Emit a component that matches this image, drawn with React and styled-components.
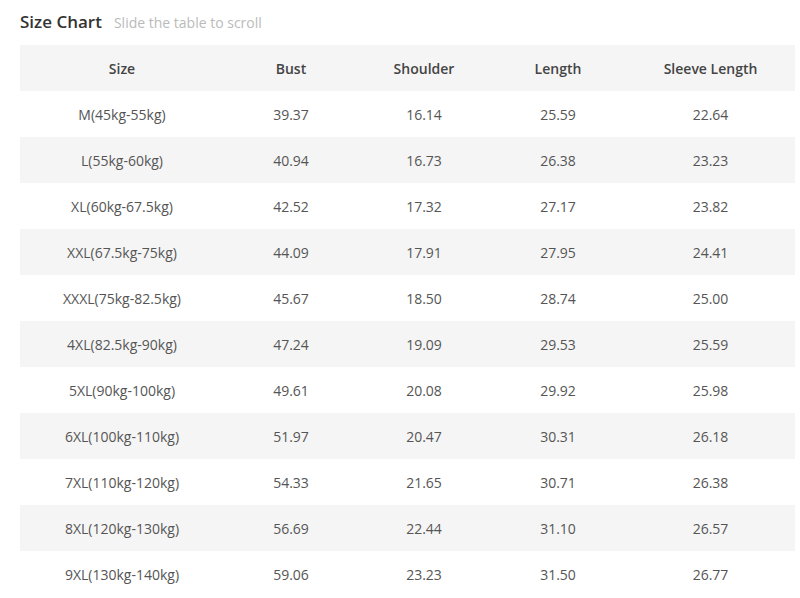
import React from 'react';
import styled, { createGlobalStyle } from 'styled-components';

const GlobalStyle = createGlobalStyle`
  body {
    margin: 0;
    background: #fff;
    font-family: "Open Sans", "Liberation Sans", sans-serif;
  }
`;

const Wrapper = styled.div`
  padding: 10px 5px 0 20px;
`;

const TitleBar = styled.div`
  display: flex;
  align-items: baseline;
  gap: 12px;
  height: 35px;
`;

const Title = styled.h2`
  margin: 0;
  font-size: 17px;
  font-weight: 600;
  color: #333;
`;

const Hint = styled.span`
  font-size: 14px;
  color: #bbb;
`;

const Table = styled.table`
  width: 775px;
  border-collapse: collapse;
  table-layout: fixed;
`;

const Row = styled.tr`
  height: 46px;
  background: ${props => (props.striped ? '#f5f5f5' : '#fff')};
`;

const HeadCell = styled.th`
  width: ${props => props.w}px;
  padding: 0;
  font-size: 14px;
  font-weight: 600;
  color: #444;
  text-align: center;
`;

const Cell = styled.td`
  padding: 0;
  font-size: 14px;
  color: #555;
  text-align: center;
`;

const columns = [
  { label: 'Size', width: 204 },
  { label: 'Bust', width: 134 },
  { label: 'Shoulder', width: 132 },
  { label: 'Length', width: 136 },
  { label: 'Sleeve Length', width: 169 },
];

const rows = [
  ['M(45kg-55kg)', '39.37', '16.14', '25.59', '22.64'],
  ['L(55kg-60kg)', '40.94', '16.73', '26.38', '23.23'],
  ['XL(60kg-67.5kg)', '42.52', '17.32', '27.17', '23.82'],
  ['XXL(67.5kg-75kg)', '44.09', '17.91', '27.95', '24.41'],
  ['XXXL(75kg-82.5kg)', '45.67', '18.50', '28.74', '25.00'],
  ['4XL(82.5kg-90kg)', '47.24', '19.09', '29.53', '25.59'],
  ['5XL(90kg-100kg)', '49.61', '20.08', '29.92', '25.98'],
  ['6XL(100kg-110kg)', '51.97', '20.47', '30.31', '26.18'],
  ['7XL(110kg-120kg)', '54.33', '21.65', '30.71', '26.38'],
  ['8XL(120kg-130kg)', '56.69', '22.44', '31.10', '26.57'],
  ['9XL(130kg-140kg)', '59.06', '23.23', '31.50', '26.77'],
];

const App = () => (
  <Wrapper>
    <GlobalStyle />
    <TitleBar>
      <Title>Size Chart</Title>
      <Hint>Slide the table to scroll</Hint>
    </TitleBar>
    <Table>
      <thead>
        <Row striped>
          {columns.map(col => (
            <HeadCell key={col.label} w={col.width}>{col.label}</HeadCell>
          ))}
        </Row>
      </thead>
      <tbody>
        {rows.map((row, i) => (
          <Row key={row[0]} striped={i % 2 === 1}>
            {row.map((value, j) => (
              <Cell key={j}>{value}</Cell>
            ))}
          </Row>
        ))}
      </tbody>
    </Table>
  </Wrapper>
);

export default App;
